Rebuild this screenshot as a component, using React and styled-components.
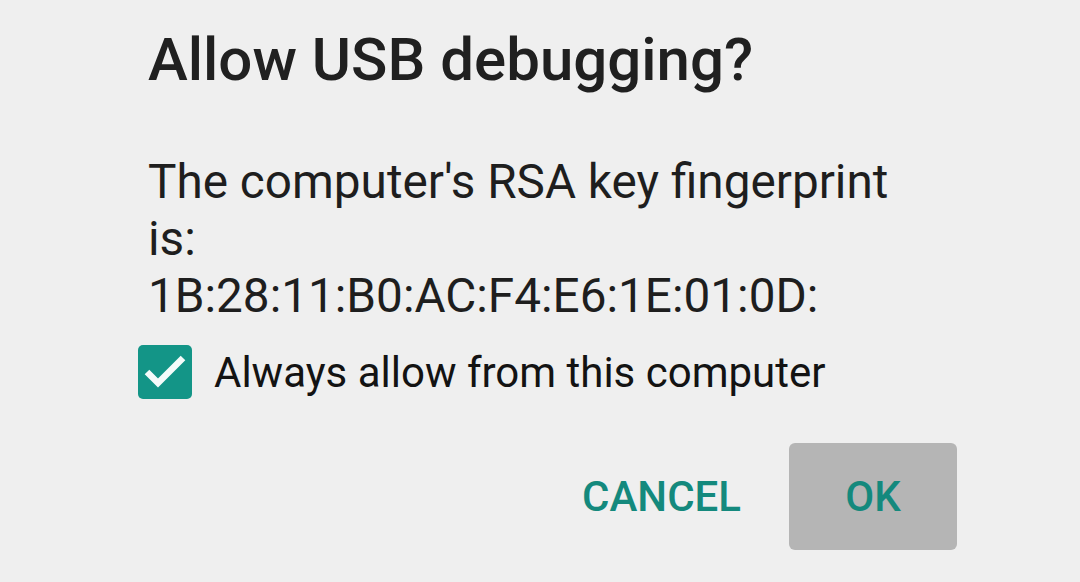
import React, { useState } from 'react'
import styled, { createGlobalStyle } from 'styled-components'

const Global = createGlobalStyle`
  html, body {
    margin: 0;
    padding: 0;
    background: #efefef;
  }
  body {
    font-family: Roboto, "Noto Sans", sans-serif;
  }
`

const Dialog = styled.div`
  width: 1080px;
  height: 582px;
  box-sizing: border-box;
  padding: 23px 123px 0 148px;
  background: #efefef;
  display: flex;
  flex-direction: column;
  overflow: hidden;
`

const Title = styled.h1`
  margin: 0;
  font-size: 60px;
  font-weight: 500;
  line-height: 74px;
  color: #202020;
`

const Message = styled.p`
  margin: 57px 0 0;
  font-size: 47.7px;
  font-weight: 400;
  line-height: 57px;
  color: #1e1e1e;
  width: 760px;
`

const CheckRow = styled.label`
  display: flex;
  align-items: center;
  gap: 22px;
  margin: 20px 0 0 -10px;
  cursor: pointer;
`

const Box = styled.span`
  width: 54px;
  height: 54px;
  border-radius: 5px;
  background: ${p => (p.checked ? '#139587' : 'transparent')};
  border: ${p => (p.checked ? 'none' : '4px solid #666')};
  box-sizing: border-box;
  display: flex;
`

const Label = styled.span`
  font-size: 42px;
  color: #131313;
`

const Actions = styled.div`
  display: flex;
  justify-content: flex-end;
  align-items: center;
  gap: 48px;
  margin-top: 44px;
`

const Button = styled.button`
  border: none;
  border-radius: 6px;
  background: ${p => (p.pressed ? '#b5b5b5' : 'transparent')};
  color: #14897d;
  font-family: Roboto, sans-serif;
  font-weight: 500;
  font-size: 42px;
  height: 107px;
  min-width: ${p => (p.pressed ? '168px' : 'auto')};
  padding: 0;
`

export default function App() {
  const [always, setAlways] = useState(true)

  return (
    <>
      <Global />
      <Dialog>
        <Title>Allow USB debugging?</Title>
        <Message>
          The computer's RSA key fingerprint is:<br />
          1B:28:11:B0:AC:F4:E6:1E:01:0D:
        </Message>
        <CheckRow onClick={() => setAlways(!always)}>
          <Box checked={always}>
            {always && (
              <svg width="54" height="54" viewBox="0 0 54 54">
                <path d="M9 27 L20 38 L45 13" fill="none" stroke="#f4fbfa" strokeWidth="6.5" />
              </svg>
            )}
          </Box>
          <Label>Always allow from this computer</Label>
        </CheckRow>
        <Actions>
          <Button>CANCEL</Button>
          <Button pressed>OK</Button>
        </Actions>
      </Dialog>
    </>
  )
}
